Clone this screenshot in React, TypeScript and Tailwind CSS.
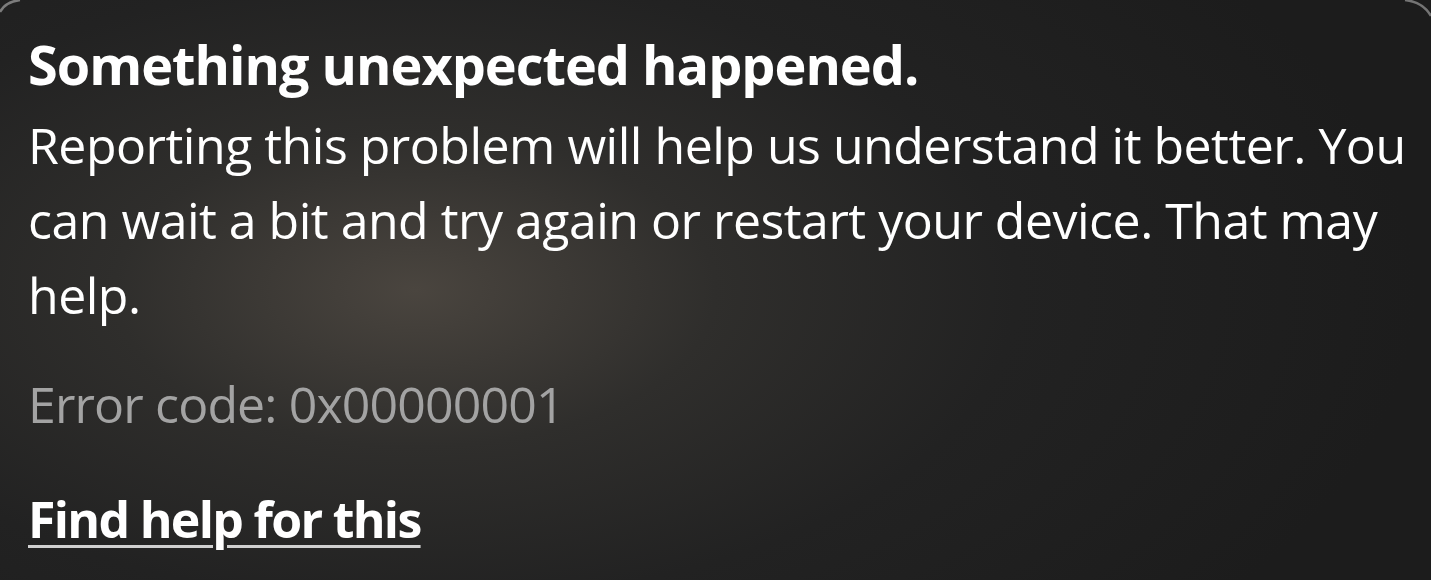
export default function App() {
  return (
    <div className="relative h-[580px] w-[1431px] overflow-hidden bg-[radial-gradient(ellipse_70%_90%_at_29%_50%,#4a453f_0%,#2f2e2c_30%,#222222_60%,#1c1c1c_100%)] font-['Open_Sans',sans-serif] text-white">
      {/* corner edges of the window frame */}
      <svg className="absolute left-0 top-0" width="40" height="30" viewBox="0 0 40 30">
        <path d="M0 12 Q5 2 20 0" fill="none" stroke="#7c7c7c" strokeWidth="2.5" />
      </svg>
      <svg className="absolute right-0 top-0" width="40" height="30" viewBox="0 0 40 30">
        <path d="M14 0 Q32 2 40 16" fill="none" stroke="#747474" strokeWidth="2.5" />
      </svg>

      <div className="flex flex-col pl-[28px] pr-[20px] pt-[26px]">
        <h1 className="text-[54px] font-bold leading-[77px] tracking-[-1px]">Something unexpected happened.</h1>
        <p className="mt-[5px] text-[50px] leading-[75px] tracking-[-0.5px]">
          Reporting this problem will help us understand it better. You can wait a bit and try again or restart your device. That may help.
        </p>
        <p className="mt-[34px] text-[50px] leading-[75px] tracking-[-0.85px] text-[#a3a3a3]">Error code: 0x00000001</p>
        <a className="mt-[40px] self-start text-[50px] font-bold leading-[75px] tracking-[-1.7px] underline decoration-[#d0d0d0] decoration-[3px] underline-offset-[7px]">
          Find help for this
        </a>
      </div>
    </div>
  );
}
